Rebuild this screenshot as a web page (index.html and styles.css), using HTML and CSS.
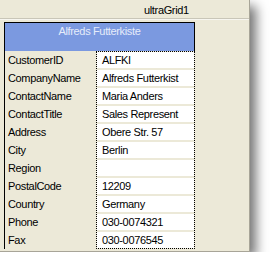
FILE: index.html
```html
<!DOCTYPE html>
<html lang="en">
<head>
  <meta charset="UTF-8">
  <title>ultraGrid1</title>
  <link rel="stylesheet" href="styles.css">
</head>
<body>
  <div class="window">
    <div class="caption">ultraGrid1</div>
    <div class="grid">
      <div class="grid-header">Alfreds Futterkiste</div>
      <div class="fields">
        <div class="labels">
          <div class="label">CustomerID</div>
          <div class="label">CompanyName</div>
          <div class="label">ContactName</div>
          <div class="label">ContactTitle</div>
          <div class="label">Address</div>
          <div class="label">City</div>
          <div class="label">Region</div>
          <div class="label">PostalCode</div>
          <div class="label">Country</div>
          <div class="label">Phone</div>
          <div class="label">Fax</div>
        </div>
        <div class="values">
          <div class="value">ALFKI</div>
          <div class="value">Alfreds Futterkist</div>
          <div class="value">Maria Anders</div>
          <div class="value">Sales Represent</div>
          <div class="value">Obere Str. 57</div>
          <div class="value">Berlin</div>
          <div class="value"></div>
          <div class="value">12209</div>
          <div class="value">Germany</div>
          <div class="value">030-0074321</div>
          <div class="value">030-0076545</div>
        </div>
      </div>
    </div>
  </div>
</body>
</html>
```

FILE: styles.css
```css
body {
  margin: 0;
  background: #fff;
  font-family: 'Liberation Sans', Arial, sans-serif;
  font-size: 11px;
  letter-spacing: -0.35px;
  color: #000;
}
.window {
  width: 249px;
  height: 251px;
  background: #ece9d8;
  border-right: 1px solid #a8a598;
  border-bottom: 1px solid #a8a598;
  box-shadow: 6px 6px 11px rgba(0, 0, 0, 0.55);
  overflow: hidden;
}
.caption {
  height: 15px;
  padding-top: 3px;
  padding-left: 144px;
  line-height: 15px;
  border-bottom: 1px solid #c9c6b8;
  box-shadow: 0 1px 0 #f7f6f0;
}
.grid {
  margin: 3px 0 0 4px;
  width: 190px;
  border-left: 1px solid #000;
  border-top: 1px solid #000;
}
.grid-header {
  height: 26px;
  padding-top: 2px;
  background: #7b99e0;
  color: #e6ecfa;
  text-align: center;
  line-height: 13px;
  border-right: 1px solid #000;
}
.fields {
  display: flex;
}
.labels {
  width: 91px;
}
.label {
  height: 18px;
  line-height: 18px;
  padding-left: 3px;
}
.values {
  width: 97px;
  border: 1px dotted #000;
  background: #ece9d8;
}
.value {
  height: 16px;
  line-height: 16px;
  padding-left: 5px;
  background: #fff;
  white-space: nowrap;
  overflow: hidden;
  margin-bottom: 2px;
}
.value:last-child {
  margin-bottom: 0;
}
```
